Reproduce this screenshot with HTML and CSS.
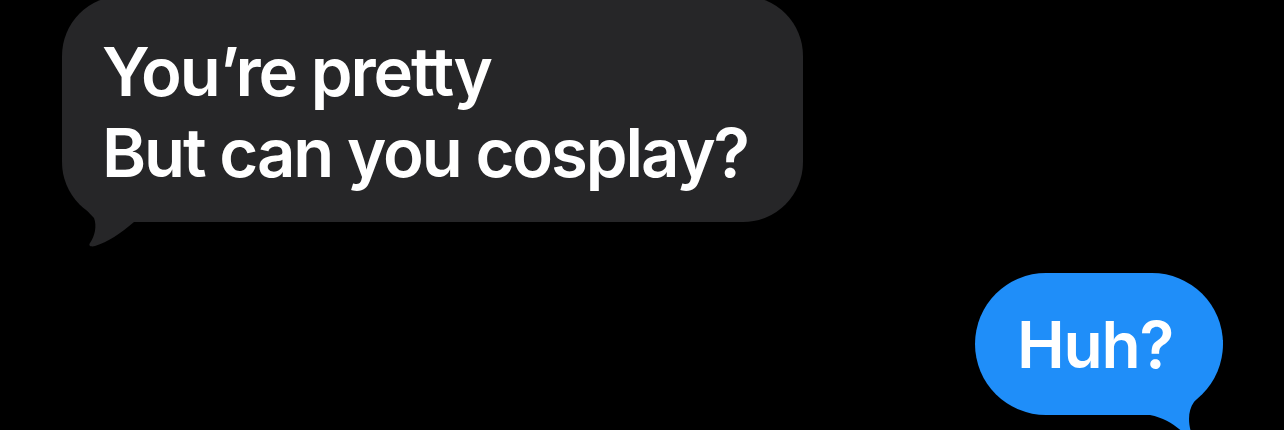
FILE: index.html
```html
<!DOCTYPE html>
<html lang="en">
<head>
<meta charset="utf-8">
<title>Messages</title>
<link rel="stylesheet" href="styles.css">
</head>
<body>
<main class="thread">
  <div class="bubble bubble-in">
    <svg class="tail tail-in" width="98" height="98" viewBox="0 0 98 98" aria-hidden="true">
      <path d="M0 0 C0 25 10 45 32 68 C35 76 33 86 28 93 C26 96 29 97 33 96 C46 92 58 84 72 72 L98 72 L98 0 Z"/>
    </svg>
    <p class="msg">You’re pretty<br>But can you cosplay?</p>
  </div>
  <div class="bubble bubble-out">
    <svg class="tail tail-out" width="93" height="100" viewBox="0 0 93 100" aria-hidden="true">
      <path d="M93 0 C92 25 82 43 64 62 C58 70 58 82 61 92 C62 97 58 97 55 94 C45 85 35 78 20 75 L0 75 L0 0 Z"/>
    </svg>
    <p class="msg">Huh?</p>
  </div>
</main>
</body>
</html>
```
FILE: styles.css
```css
html, body {
  margin: 0;
  padding: 0;
  background: #000;
}
body {
  width: 1284px;
  height: 430px;
  overflow: hidden;
  font-family: "Inter", "Liberation Sans", sans-serif;
  -webkit-font-smoothing: antialiased;
}
.thread {
  display: flex;
  flex-direction: column;
}
.bubble {
  position: relative;
  border-radius: 60px;
}
.msg {
  position: relative;
  z-index: 1;
  margin: 0;
  color: #fff;
  font-weight: 600;
  white-space: nowrap;
}
.bubble-in {
  align-self: flex-start;
  margin-top: -4px;
  margin-left: 62px;
  width: 741px;
  box-sizing: border-box;
  padding: 35px 0 29px 40px;
  background: #262628;
}
.bubble-in .msg {
  font-size: 67px;
  line-height: 81px;
  letter-spacing: -2.1px;
}
.bubble-out {
  align-self: flex-end;
  margin-top: 51px;
  margin-right: 61px;
  width: 248px;
  box-sizing: border-box;
  padding: 33px 0 31px 42px;
  background: #1f8ef9;
  border-radius: 72px;
}
.bubble-out .msg {
  font-size: 64px;
  line-height: 78px;
  letter-spacing: -1.2px;
}
.tail {
  position: absolute;
  z-index: 0;
}
.tail-in {
  left: 0;
  bottom: -26px;
  fill: #262628;
}
.tail-out {
  right: 0;
  bottom: -25px;
  fill: #1f8ef9;
}
```
